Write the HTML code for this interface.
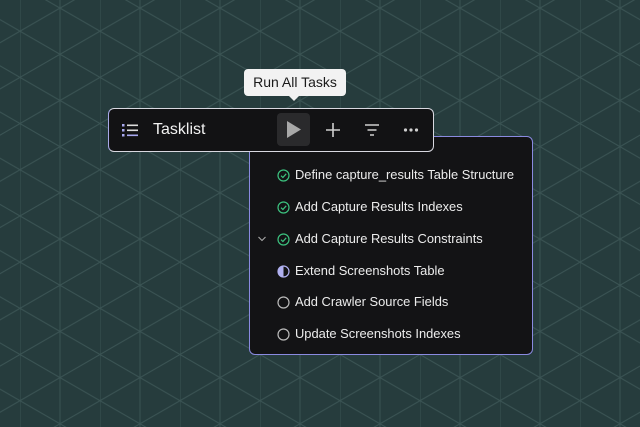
<!DOCTYPE html>
<html><head><meta charset="utf-8"><style>
*{margin:0;padding:0;box-sizing:border-box}
body{width:640px;height:427px;overflow:hidden;background:#263c3d;font-family:"Liberation Sans",sans-serif;position:relative}
svg.bg{position:absolute;left:0;top:0}
.tip{position:absolute;left:244px;top:69px;width:102px;height:27px;background:#f2f2f2;border-radius:4px;font-size:14px;color:#1a1a1a;line-height:27px;text-align:center}
.tip:after{content:"";position:absolute;left:45px;bottom:-5px;border-left:5px solid transparent;border-right:5px solid transparent;border-top:5px solid #f2f2f2}
.bar{position:absolute;left:108px;top:108px;width:326px;height:44px;background:#121214;border:1.5px solid #d8d8e0;border-left-color:#a8a8e8;border-radius:6px;z-index:3}
.bar .t{position:absolute;left:44px;top:12px;font-size:16px;color:#f2f2f2}
.play{position:absolute;left:168px;top:4px;width:33px;height:33px;background:#2a2a2c;border-radius:4px}
.panel{position:absolute;left:249px;top:136px;width:284px;height:219px;background:#131315;border:1px solid #8a8ae0;border-radius:6px;z-index:2}
.row{position:absolute;left:27px;font-size:12.9px;color:#ececec;height:16px;line-height:16px}
.row svg{position:absolute;left:0;top:2px}
.row span{position:absolute;left:18px;white-space:nowrap}
</style></head><body>
<svg class="bg" width="640" height="427"><defs><pattern id="p" width="80" height="46.19" patternUnits="userSpaceOnUse" x="20" y="-15"><g stroke="#3b5454" stroke-width="1" fill="none"><line x1="0" y1="0" x2="0" y2="46.19"/><line x1="40" y1="0" x2="40" y2="46.19"/><line x1="0" y1="0" x2="80" y2="46.19"/><line x1="0" y1="46.19" x2="80" y2="0"/></g></pattern></defs><rect width="640" height="427" fill="url(#p)"/></svg>
<div class="tip">Run All Tasks</div>
<div class="bar">
<svg style="position:absolute;left:12px;top:13px" width="18" height="16" fill="#a9a9f0"><rect x="1" y="2" width="2.5" height="2.5"/><rect x="1" y="7" width="2.5" height="2.5"/><rect x="1" y="12" width="2.5" height="2.5"/><rect x="6" y="2.5" width="11" height="1.6" fill="#ddd"/><rect x="6" y="7.5" width="11" height="1.6" fill="#ddd"/><rect x="6" y="12.5" width="11" height="1.6"/></svg>
<div class="t">Tasklist</div>
<div class="play"><svg width="33" height="33"><path d="M10 8 L24 16.5 L10 25Z" fill="#a8a8a8"/></svg></div>
<svg style="position:absolute;left:216px;top:13px" width="16" height="16" stroke="#cfcfcf" stroke-width="1.6"><path d="M8 1V15M1 8H15"/></svg>
<svg style="position:absolute;left:255px;top:13px" width="16" height="16" stroke="#cfcfcf" stroke-width="1.5"><path d="M1 3H15M3.5 8H12.5M6 13H10"/></svg>
<svg style="position:absolute;left:294px;top:13px" width="16" height="16" fill="#cfcfcf"><circle cx="2.5" cy="8" r="1.6"/><circle cx="8" cy="8" r="1.6"/><circle cx="13.5" cy="8" r="1.6"/></svg>
</div>
<div class="panel">
<div class="row" style="top:30px"><svg width="13" height="13"><circle cx="6.5" cy="6.5" r="5.5" fill="none" stroke="#3cc27f" stroke-width="1.2"/><path d="M4 6.7L5.9 8.5L9.2 4.8" fill="none" stroke="#3cc27f" stroke-width="1.2"/></svg><span>Define capture_results Table Structure</span></div>
<div class="row" style="top:62px"><svg width="13" height="13"><circle cx="6.5" cy="6.5" r="5.5" fill="none" stroke="#3cc27f" stroke-width="1.2"/><path d="M4 6.7L5.9 8.5L9.2 4.8" fill="none" stroke="#3cc27f" stroke-width="1.2"/></svg><span>Add Capture Results Indexes</span></div>
<div class="row" style="top:94px"><svg style="left:-20px!important;top:4px" width="10" height="8"><path d="M1.5 2L5 5.5L8.5 2" fill="none" stroke="#aaa" stroke-width="1.1"/></svg><svg width="13" height="13"><circle cx="6.5" cy="6.5" r="5.5" fill="none" stroke="#3cc27f" stroke-width="1.2"/><path d="M4 6.7L5.9 8.5L9.2 4.8" fill="none" stroke="#3cc27f" stroke-width="1.2"/></svg><span>Add Capture Results Constraints</span></div>
<div class="row" style="top:126px"><svg width="13" height="13"><circle cx="6.5" cy="6.5" r="5.5" fill="none" stroke="#b0b0f0" stroke-width="1.2"/><path d="M6.5 1A5.5 5.5 0 0 0 6.5 12Z" fill="#b0b0f0"/></svg><span>Extend Screenshots Table</span></div>
<div class="row" style="top:157px"><svg width="13" height="13"><circle cx="6.5" cy="6.5" r="5.5" fill="none" stroke="#bbb" stroke-width="1.2"/></svg><span>Add Crawler Source Fields</span></div>
<div class="row" style="top:189px"><svg width="13" height="13"><circle cx="6.5" cy="6.5" r="5.5" fill="none" stroke="#bbb" stroke-width="1.2"/></svg><span>Update Screenshots Indexes</span></div>
</div>
</body></html>
